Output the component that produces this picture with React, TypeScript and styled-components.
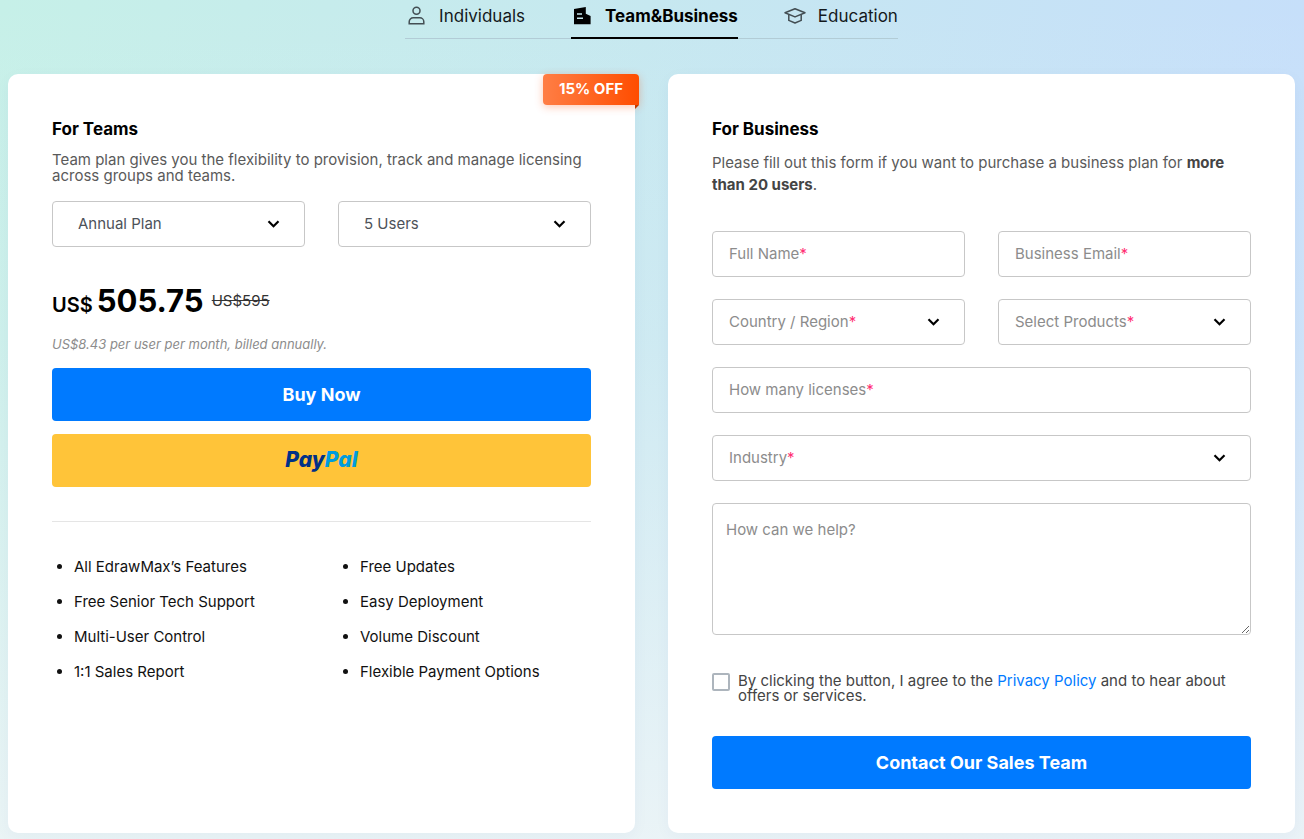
import React from "react";
import styled, { createGlobalStyle, css } from "styled-components";

const GlobalStyle = createGlobalStyle`
  *, *::before, *::after { box-sizing: border-box; }
  body {
    margin: 0;
    font-family: Inter, "Liberation Sans", sans-serif;
    font-size: 15px;
    line-height: 22px;
    color: #000;
  }
`;

const Page = styled.main`
  min-height: 100vh;
  padding: 0 9px 6px 8px;
  background:
    linear-gradient(180deg, rgba(238, 245, 247, 0) 0%, rgba(238, 245, 247, 0.2) 40%, rgba(238, 245, 247, 0.9) 100%),
    linear-gradient(100deg, #c6f0e8 0%, #c6e8f0 45%, #c6dffa 90%);
`;

const Tabs = styled.nav`
  display: flex;
  justify-content: center;
  margin-bottom: 35px;
`;

const TabList = styled.div`
  display: flex;
  gap: 46px;
  box-shadow: inset 0 -1px 0 #b2ccd6;
`;

const Tab = styled.button<{ $active?: boolean }>`
  display: flex;
  align-items: center;
  gap: 10px;
  height: 39px;
  padding: 0 0 5px;
  border: 0;
  border-bottom: 2px solid ${(p) => (p.$active ? "#000" : "transparent")};
  background: none;
  color: ${(p) => (p.$active ? "#000" : "#14191c")};
  font: inherit;
  font-size: 17px;
  font-weight: ${(p) => (p.$active ? 700 : 400)};
  cursor: pointer;

  svg { width: 24px; height: 24px; }
`;

const Plans = styled.div`
  display: grid;
  grid-template-columns: repeat(2, minmax(0, 1fr));
  gap: 33px;
`;

const Card = styled.section`
  position: relative;
  padding: 44px;
  border-radius: 10px;
  background: #fff;
  box-shadow: 0 4px 16px rgba(0, 60, 120, 0.04);
`;

const Ribbon = styled.div`
  position: absolute;
  top: 0;
  right: -4px;
  padding: 4px 16px 5px;
  border-radius: 4px 4px 0 4px;
  background: linear-gradient(90deg, #ff7e45, #ff4d00);
  box-shadow: 0 2px 8px rgba(255, 77, 0, 0.3);
  color: #fff;
  font-weight: 700;

  &::after {
    content: "";
    position: absolute;
    top: 100%;
    right: 0;
    border-top: 4px solid #c23a00;
    border-right: 4px solid transparent;
  }
`;

const Title = styled.h2`
  margin: 0;
  font-size: 17px;
  line-height: 22px;
  font-weight: 700;
`;

const Intro = styled.p<{ $tight?: boolean }>`
  margin: ${(p) => (p.$tight ? "12px 0 17px" : "12px 0 35px")};
  line-height: ${(p) => (p.$tight ? "16px" : "22px")};
  color: #5a5a5a;

  b { color: #444; }
`;

const FieldGrid = styled.div`
  display: grid;
  grid-template-columns: repeat(2, minmax(0, 1fr));
  gap: 22px 33px;
`;

const Field = styled.div<{ $wide?: boolean }>`
  display: grid;
  align-items: center;
  grid-column: ${(p) => (p.$wide ? "1 / -1" : "auto")};

  > * { grid-area: 1 / 1; }
  > svg {
    justify-self: end;
    width: 14px;
    height: 14px;
    margin-right: 24px;
    pointer-events: none;
  }
`;

const control = css`
  width: 100%;
  height: 46px;
  border: 1px solid #c7c7c7;
  border-radius: 4px;
  background: #fff;
  color: #4d5259;
  font: inherit;
  outline-color: #007aff;
`;

const Input = styled.input`
  ${control}
  padding: 0 17px;
`;

const Select = styled.select<{ $inset?: boolean }>`
  ${control}
  appearance: none;
  padding: 0 ${(p) => (p.$inset ? "25px" : "17px")};
`;

const Message = styled.textarea`
  ${control}
  display: block;
  grid-column: 1 / -1;
  height: 132px;
  padding: 15px 13px;
  resize: vertical;

  &::placeholder { color: #8c8c8c; }
`;

const FieldLabel = styled.label`
  justify-self: start;
  padding-left: 17px;
  color: #8c8c8c;
  pointer-events: none;

  span { color: #ff2f73; }
`;

const PriceRow = styled.div`
  display: flex;
  align-items: baseline;
  margin-top: 34px;
`;

const Currency = styled.span`
  margin-right: 4px;
  font-size: 20px;
  line-height: 20px;
  font-weight: 600;
`;

const Price = styled.span`
  margin-right: 8px;
  font-size: 31px;
  line-height: 40px;
  font-weight: 700;
`;

const OldPrice = styled.del`
  align-self: center;
  color: #333;
`;

const Note = styled.p`
  margin: 12px 0;
  font-size: 13px;
  line-height: 23px;
  font-style: italic;
  color: #8c8c8c;
`;

const ActionButton = styled.button<{ $paypal?: boolean }>`
  display: block;
  width: 100%;
  height: 53px;
  padding: 0;
  border: 0;
  border-radius: 4px;
  background: ${(p) => (p.$paypal ? "#ffc439" : "#007aff")};
  color: #fff;
  font: inherit;
  font-size: 18px;
  font-weight: 700;
  cursor: pointer;

  & + & { margin-top: 13px; }
`;

const PayPal = styled.span`
  font-size: 21px;
  font-weight: 800;
  font-style: italic;
  color: #003087;

  span { color: #009cde; }
`;

const Divider = styled.hr`
  margin: 34px 0 32px;
  border: 0;
  border-top: 1px solid #e5e5e5;
`;

const Features = styled.ul`
  display: grid;
  grid-template-columns: repeat(2, minmax(0, 1fr));
  gap: 9px 33px;
  margin: 0;
  padding: 0;
  line-height: 26px;
`;

const Feature = styled.li`
  margin-left: 22px;
  margin-right: -22px;
  color: #111;
`;

const Consent = styled.div`
  display: flex;
  gap: 8px;
  margin: 38px 0 33px;
  line-height: 15px;
  color: #444;

  a { color: #007aff; text-decoration: none; }
`;

const Checkbox = styled.input`
  appearance: none;
  flex: none;
  width: 18px;
  height: 18px;
  margin: 0;
  border: 2px solid #adb5bd;
  border-radius: 2px;
  background: #fff;

  &:checked { background: #007aff; border-color: #007aff; }
`;

const Chevron = () => (
  <svg viewBox="0 0 14 14" fill="none" stroke="#000" strokeWidth="2.2" aria-hidden="true">
    <path d="M1.5 4.3 6.5 9.3 11.5 4.3" />
  </svg>
);

const PersonIcon = () => (
  <svg viewBox="0 0 24 24" fill="none" stroke="#434e53" strokeWidth="1.5" aria-hidden="true">
    <circle cx="11.5" cy="6.8" r="3.5" />
    <path d="M4.2 19.8v-2a4 4 0 0 1 4-4h6.6a4 4 0 0 1 4 4v2z" />
  </svg>
);

const BuildingIcon = () => (
  <svg viewBox="0 0 24 24" fill="#000" aria-hidden="true">
    <path
      fillRule="evenodd"
      d="M3 5 14.8 3v6.8l4.8 2.2v8.2H3zM6 9.3v1.4h5V9.3zM6 13.5v1.4h6v-1.4z"
    />
  </svg>
);

const CapIcon = () => (
  <svg viewBox="0 0 24 24" fill="none" stroke="#434e53" strokeWidth="1.5" strokeLinejoin="round" aria-hidden="true">
    <path d="M11 4.8 21 8.8 11 12.9 1 8.8z" />
    <path d="M4.8 10.6v5.8L11 19l6.2-2.6v-5.8" />
  </svg>
);

const features = [
  "All EdrawMax’s Features",
  "Free Updates",
  "Free Senior Tech Support",
  "Easy Deployment",
  "Multi-User Control",
  "Volume Discount",
  "1:1 Sales Report",
  "Flexible Payment Options",
];

type FormFieldProps = { id: string; label: string; select?: boolean; wide?: boolean; type?: string };

const FormField = ({ id, label, select, wide, type = "text" }: FormFieldProps) => (
  <Field $wide={wide}>
    {select ? (
      <Select id={id} defaultValue="" required>
        <option value="" />
      </Select>
    ) : (
      <Input id={id} type={type} required />
    )}
    <FieldLabel htmlFor={id}>
      {label}
      <span>*</span>
    </FieldLabel>
    {select && <Chevron />}
  </Field>
);

export default function App() {
  return (
    <>
      <GlobalStyle />
      <Page>
        <Tabs aria-label="Plan type">
          <TabList>
            <Tab type="button"><PersonIcon />Individuals</Tab>
            <Tab type="button" $active aria-current="page"><BuildingIcon />Team&amp;Business</Tab>
            <Tab type="button"><CapIcon />Education</Tab>
          </TabList>
        </Tabs>
        <Plans>
          <Card>
            <Ribbon>15% OFF</Ribbon>
            <Title>For Teams</Title>
            <Intro $tight>
              Team plan gives you the flexibility to provision, track and manage licensing across groups and teams.
            </Intro>
            <FieldGrid>
              <Field>
                <Select $inset aria-label="Billing plan"><option>Annual Plan</option></Select>
                <Chevron />
              </Field>
              <Field>
                <Select $inset aria-label="Number of users"><option>5 Users</option></Select>
                <Chevron />
              </Field>
            </FieldGrid>
            <PriceRow>
              <Currency>US$</Currency>
              <Price>505.75</Price>
              <OldPrice>US$595</OldPrice>
            </PriceRow>
            <Note>US$8.43 per user per month, billed annually.</Note>
            <ActionButton type="button">Buy Now</ActionButton>
            <ActionButton type="button" $paypal>
              <PayPal>Pay<span>Pal</span></PayPal>
            </ActionButton>
            <Divider />
            <Features>
              {features.map((text) => <Feature key={text}>{text}</Feature>)}
            </Features>
          </Card>
          <Card>
            <Title>For Business</Title>
            <Intro>
              Please fill out this form if you want to purchase a business plan for <b>more than 20 users</b>.
            </Intro>
            <form>
              <FieldGrid>
                <FormField id="name" label="Full Name" />
                <FormField id="email" label="Business Email" type="email" />
                <FormField id="country" label="Country / Region" select />
                <FormField id="products" label="Select Products" select />
                <FormField id="licenses" label="How many licenses" wide />
                <FormField id="industry" label="Industry" select wide />
                <Message aria-label="How can we help?" placeholder="How can we help?" />
              </FieldGrid>
              <Consent>
                <Checkbox id="consent" type="checkbox" />
                <label htmlFor="consent">
                  By clicking the button, I agree to the <a href="#privacy">Privacy Policy</a> and to hear about offers or services.
                </label>
              </Consent>
              <ActionButton type="submit">Contact Our Sales Team</ActionButton>
            </form>
          </Card>
        </Plans>
      </Page>
    </>
  );
}
